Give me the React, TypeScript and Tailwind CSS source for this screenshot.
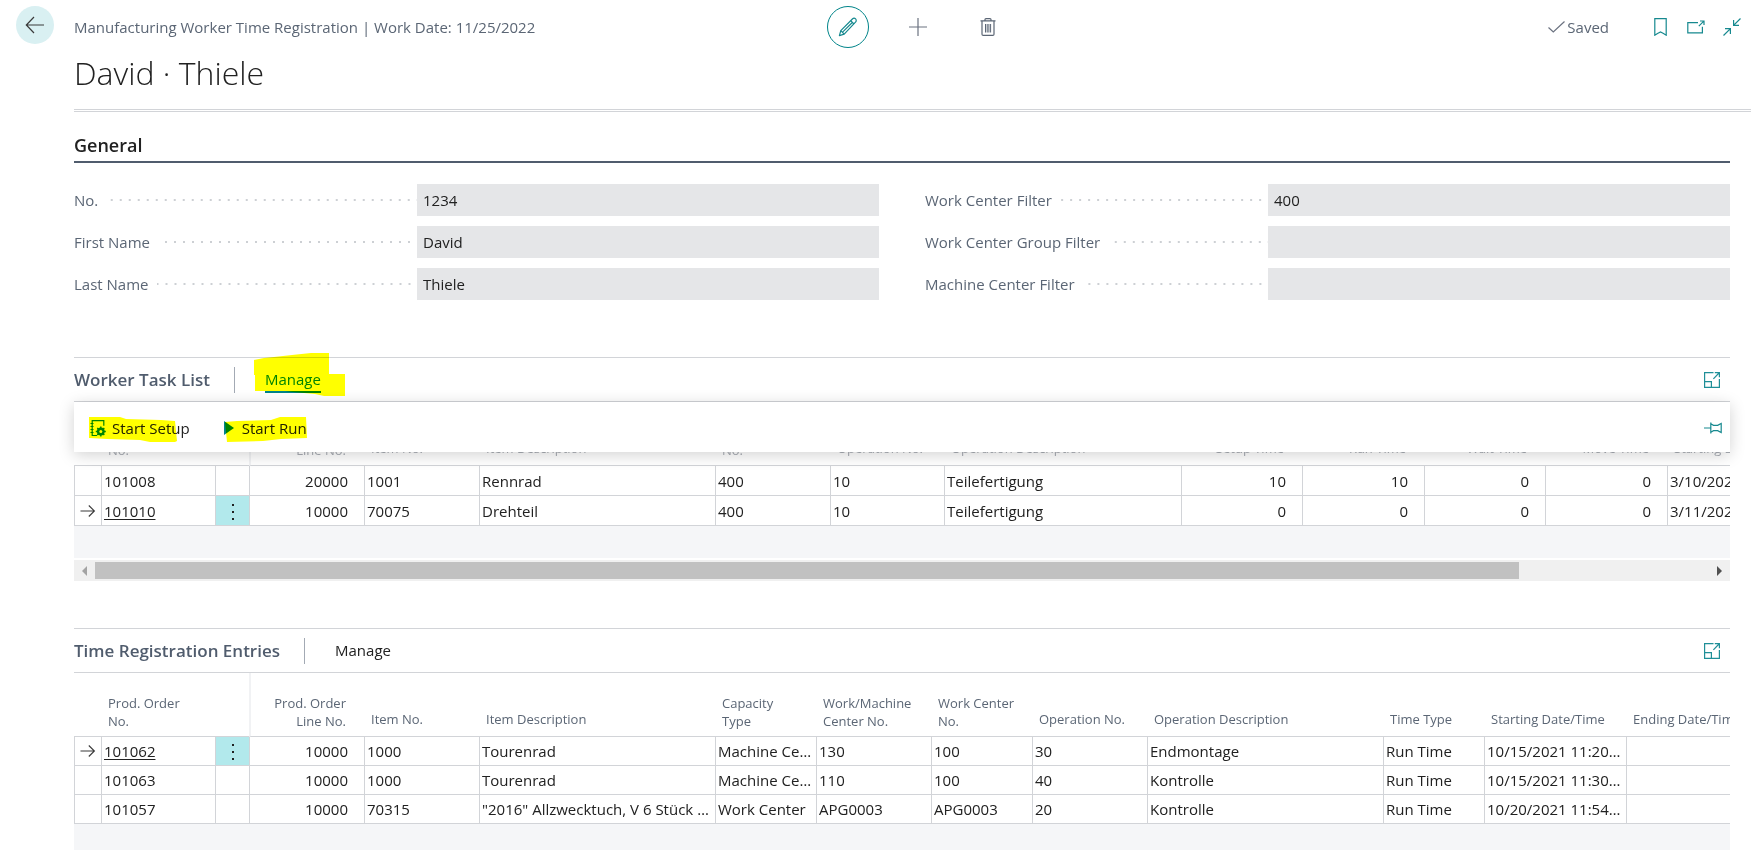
import type { ReactNode } from 'react';

type Column = { label: ReactNode; width: string; align?: 'right' };
type Row = { id: string; active?: boolean; cells: string[] };

const taskColumns: Column[] = [
  { label: <>Prod. Order<br />Line No.</>, width: 'w-[115px]', align: 'right' },
  { label: 'Item No.', width: 'w-[115px]' },
  { label: 'Item Description', width: 'w-[236px]' },
  { label: <>Work Center<br />No.</>, width: 'w-[115px]' },
  { label: 'Operation No.', width: 'w-[114px]' },
  { label: 'Operation Description', width: 'w-[237px]' },
  { label: 'Setup Time', width: 'w-[121px]', align: 'right' },
  { label: 'Run Time', width: 'w-[122px]', align: 'right' },
  { label: 'Wait Time', width: 'w-[121px]', align: 'right' },
  { label: 'Move Time', width: 'w-[122px]', align: 'right' },
  { label: 'Starting Date/Time', width: 'w-[142px]' },
];

const taskRows: Row[] = [
  { id: '101008', cells: ['20000', '1001', 'Rennrad', '400', '10', 'Teilefertigung', '10', '10', '0', '0', '3/10/2022 8:00'] },
  { id: '101010', active: true, cells: ['10000', '70075', 'Drehteil', '400', '10', 'Teilefertigung', '0', '0', '0', '0', '3/11/2022 8:00'] },
];

const entryColumns: Column[] = [
  { label: <>Prod. Order<br />Line No.</>, width: 'w-[115px]', align: 'right' },
  { label: 'Item No.', width: 'w-[115px]' },
  { label: 'Item Description', width: 'w-[236px]' },
  { label: <>Capacity<br />Type</>, width: 'w-[101px]' },
  { label: <>Work/Machine<br />Center No.</>, width: 'w-[115px]' },
  { label: <>Work Center<br />No.</>, width: 'w-[101px]' },
  { label: 'Operation No.', width: 'w-[115px]' },
  { label: 'Operation Description', width: 'w-[236px]' },
  { label: 'Time Type', width: 'w-[101px]' },
  { label: 'Starting Date/Time', width: 'w-[142px]' },
  { label: 'Ending Date/Time', width: 'w-[142px]' },
];

const entryRows: Row[] = [
  { id: '101062', active: true, cells: ['10000', '1000', 'Tourenrad', 'Machine Center', '130', '100', '30', 'Endmontage', 'Run Time', '10/15/2021 11:20 AM', ''] },
  { id: '101063', cells: ['10000', '1000', 'Tourenrad', 'Machine Center', '110', '100', '40', 'Kontrolle', 'Run Time', '10/15/2021 11:30 AM', ''] },
  { id: '101057', cells: ['10000', '70315', '"2016" Allzwecktuch, V 6 Stück im Paket', 'Work Center', 'APG0003', 'APG0003', '20', 'Kontrolle', 'Run Time', '10/20/2021 11:54 AM', ''] },
];

function ExpandIcon() {
  return (
    <svg width="18" height="18" viewBox="0 0 18 18" fill="none" stroke="#1f8f98" strokeWidth="1.2" aria-hidden="true">
      <path d="M10.5 1.6H1.6v14.8h14.8V8" />
      <path d="M1.6 10.6h6.8v5.8" />
      <path d="M10.4 7.8 16 2M11.8 1.6h4.6v4.6" />
    </svg>
  );
}

function Field({ id, label, value }: { id: string; label: string; value: string }) {
  return (
    <div className="flex h-8 items-center">
      <div className="flex w-[343px] shrink-0 items-center">
        <label htmlFor={id} className="pr-2 text-[15px] text-[#5b6675]">{label}</label>
        <span className="h-[2px] flex-1 bg-[linear-gradient(to_right,#cdd0d4_2px,transparent_2px)] bg-[length:9px_2px] bg-right" />
      </div>
      <input id={id} readOnly value={value} className="h-8 min-w-0 flex-1 bg-[#e5e6e8] px-[6px] text-[15px] text-[#212121] outline-none" />
    </div>
  );
}

function DataGrid({ columns, rows, name, dimmed }: { columns: Column[]; rows: Row[]; name: string; dimmed?: boolean }) {
  const headTone = dimmed ? 'text-[#a9adb4]' : 'text-[#5b6675]';
  const rowHeight = dimmed ? 'h-[30px]' : 'h-[29px]';
  const head = 'h-16 border-b border-[#d2d4d8] text-[13px] leading-[18px] font-normal whitespace-nowrap align-bottom';
  const cell = `${rowHeight} border-b border-l border-[#d2d4d8] truncate p-0`;
  return (
    <div className="overflow-hidden">
      <table aria-label={name} className="w-0 table-fixed border-separate border-spacing-0 bg-white text-[15px] leading-5 text-[#212121]">
        <thead>
          <tr className={headTone}>
            <th className={`${head} w-[27px]`} aria-label="Selected" />
            <th className={`${head} w-[114px] pb-[6px] pl-[7px] text-left`}>Prod. Order<br />No.</th>
            <th className={`${head} w-[34px]`} aria-label="Options" />
            {columns.map((column, i) => (
              <th
                key={i}
                className={`${head} ${column.width} ${typeof column.label === 'string' ? 'pb-2' : 'pb-[6px]'} ${column.align === 'right' ? 'pr-[18px] text-right' : 'pl-[7px] text-left'} ${i === 0 ? 'border-l-2 border-l-[#f1f2f4]' : ''}`}
              >
                {column.label}
              </th>
            ))}
          </tr>
        </thead>
        <tbody>
          {rows.map((row) => (
            <tr key={row.id}>
              <td className={cell}>
                {row.active && (
                  <svg className="ml-[5px]" width="16" height="14" viewBox="0 0 16 14" fill="none" stroke="#3a3a3a" strokeWidth="1.1" aria-hidden="true">
                    <path d="M.5 7h14M8.800 1.500 14.400 7l-5.600 5.500" />
                  </svg>
                )}
              </td>
              <td className={`${cell} pl-[2px]`}>
                {row.active ? <a href="#" className="underline underline-offset-2">{row.id}</a> : row.id}
              </td>
              <td className={`${cell} ${row.active ? 'bg-[#b2e9ec]' : ''}`}>
                {row.active && (
                  <button aria-label="Row options" className="flex h-7 w-full items-center justify-center">
                    <svg width="4" height="18" viewBox="0 0 4 18" fill="#212121" aria-hidden="true">
                      <rect x="1" y="2" width="2" height="2" />
                      <rect x="1" y="9" width="2" height="2" />
                      <rect x="1" y="16" width="2" height="2" />
                    </svg>
                  </button>
                )}
              </td>
              {row.cells.map((value, i) => (
                <td key={i} className={`${cell} ${columns[i].align === 'right' ? 'pr-4 text-right' : 'pr-1 pl-[2px]'}`}>{value}</td>
              ))}
            </tr>
          ))}
        </tbody>
      </table>
    </div>
  );
}

export default function App() {
  return (
    <div className="flex min-h-screen flex-col bg-white pl-[74px] font-['Open_Sans','Noto_Sans',sans-serif] text-[#212121]">
      <header>
        <div className="relative grid h-[54px] grid-cols-[1fr_auto_1fr] items-center">
          <button aria-label="Back" className="absolute top-[6px] -left-[58px] flex h-[38px] w-[38px] items-center justify-center rounded-full bg-[#d9f0f2]">
            <svg width="20" height="18" viewBox="0 0 20 18" fill="none" stroke="#3a3a3a" strokeWidth="1.2" aria-hidden="true">
              <path d="M19 9H1.5M9 1 1.3 9 9 17" />
            </svg>
          </button>
          <p className="text-[15px] text-[#5b6675]">Manufacturing Worker Time Registration | Work Date: 11/25/2022</p>
          <div className="flex gap-7">
            <button aria-label="Edit" className="flex h-[42px] w-[42px] items-center justify-center rounded-full border border-[#008489]">
              <svg width="20" height="20" viewBox="0 0 20 20" fill="none" stroke="#16898f" strokeWidth="1.2" strokeLinejoin="round" aria-hidden="true">
                <path d="M1.4 18.6 2.8 13.6 14.4 2c1-1 2.400-.9 3.200-.1s.9 2.200-.1 3.200L6.200 17.200Z" />
                <path d="M2.800 13.600 6.200 17.200M4.800 14.900 14.800 5M12.700 3.700 16 7" />
              </svg>
            </button>
            <button aria-label="New" className="flex h-[42px] w-[42px] items-center justify-center">
              <svg width="18" height="18" viewBox="0 0 18 18" stroke="#6b7280" strokeWidth="1.2" aria-hidden="true">
                <path d="M9 0v18M0 9h18" />
              </svg>
            </button>
            <button aria-label="Delete" className="flex h-[42px] w-[42px] items-center justify-center">
              <svg width="16" height="18" viewBox="0 0 16 18" fill="none" stroke="#5b6675" strokeWidth="1.200" aria-hidden="true">
                <path d="M.5 2.800h15M5 2.800V1.600q0-1 1-1h4q1 0 1 1v1.200M2 3v13.200q0 1.200 1.200 1.200h9.600q1.200 0 1.200-1.200V3" />
                <path d="M5.500 6v8.500M7.200 6v8.500M8.900 6v8.500M10.600 6v8.500" strokeWidth="1" />
              </svg>
            </button>
          </div>
          <div className="flex items-center justify-end gap-4 pr-[19px]">
            <span className="mr-[25px] flex items-center gap-[2px] text-[15px] text-[#5b6675]">
              <svg width="17" height="12" viewBox="0 0 17 12" fill="none" stroke="#6b7280" strokeWidth="1.200" aria-hidden="true">
                <path d="M.5 6.500 5.300 11 16.500.5" />
              </svg>
              Saved
            </span>
            <button aria-label="Bookmark" className="flex h-5 w-5 items-center justify-center">
              <svg width="13" height="18" viewBox="0 0 13 18" fill="none" stroke="#16898f" strokeWidth="1.200" aria-hidden="true">
                <path d="M.8.6h11.400v16.600L9.500 15.500 6.500 14 3.500 15.500.8 17.200Z" />
              </svg>
            </button>
            <button aria-label="Open in new window" className="flex h-5 w-5 items-center justify-center">
              <svg width="18" height="14" viewBox="0 0 18 14" fill="none" stroke="#16898f" strokeWidth="1.200" aria-hidden="true">
                <path d="M11 2.600H.8v10.200h14.600V6.800" />
                <path d="M11.800 6.200 16.600 1.400M13 1h4v4" />
              </svg>
            </button>
            <button aria-label="Collapse" className="flex h-5 w-5 items-center justify-center">
              <svg width="18" height="18" viewBox="0 0 18 18" fill="none" stroke="#16898f" strokeWidth="1.200" aria-hidden="true">
                <path d="M17.500.5 10.800 7.200M10.600 2v5.400H16M.5 17.500l6.700-6.700M2 10.600h5.400V16" />
              </svg>
            </button>
          </div>
        </div>
        <div className="mr-[10px] h-[58px] border-b-[3px] border-double border-[#d2d4d8]">
          <h1 className="text-[32px] leading-[38px] font-light">David · Thiele</h1>
        </div>
      </header>

      <main className="mr-[31px] flex flex-1 flex-col">
        <section>
          <h2 className="h-[51px] border-b-2 border-[#505c6d] pt-[21px] text-[18px] leading-6 font-semibold">General</h2>
          <div className="mt-[21px] grid grid-cols-2 gap-x-[46px]">
            <div className="flex flex-col gap-[10px]">
              <Field id="no" label="No." value="1234" />
              <Field id="first-name" label="First Name" value="David" />
              <Field id="last-name" label="Last Name" value="Thiele" />
            </div>
            <div className="flex flex-col gap-[10px]">
              <Field id="work-center" label="Work Center Filter" value="400" />
              <Field id="work-center-group" label="Work Center Group Filter" value="" />
              <Field id="machine-center" label="Machine Center Filter" value="" />
            </div>
          </div>
        </section>

        <section className="mt-[57px]">
          <div className="flex h-[45px] items-center border-y border-[#d2d4d8]">
            <h2 className="text-[17px] font-semibold text-[#505c6d]">Worker Task List</h2>
            <span className="ml-6 h-[26px] w-px bg-[#a3aab4]" />
            <button className="relative ml-[30px] border-b-2 border-[#008489] text-[15px] leading-6 text-[#008489]">
              Manage
              <svg className="absolute -top-[14px] -left-[11px] z-20 mix-blend-multiply" width="91" height="44" viewBox="0 0 91 44" fill="#ff0" aria-hidden="true">
                <path d="M0 7 10 5 20 4 38 2 57 0h18v21h16v22H70l-9-2-22-2-8-1H1V22H0Z" />
              </svg>
            </button>
            <button aria-label="Expand task list" className="mr-[9px] ml-auto"><ExpandIcon /></button>
          </div>

          <div className="relative">
            <div className="absolute inset-x-0 top-0 z-10 flex h-[50px] items-center bg-white pt-[2px] pl-4 shadow-[0_3px_16px_rgba(0,0,0,0.18)]">
              <button className="relative flex items-center gap-[6px] text-[15px]">
                <svg width="16" height="17" viewBox="0 0 16 17" fill="none" stroke="#008489" strokeWidth="1.200" aria-hidden="true">
                  <path d="M7 15.500H2.200V.7h11.600v5M.5 3.500h3M.5 6.500h3M.5 9.500h3M.5 12.500h3" />
                  <circle cx="10.800" cy="11.500" r="2.800" strokeWidth="2.200" />
                  <path d="M10.800 6.500v10M5.800 11.500h10M7.300 8l7 7M14.300 8l-7 7" strokeWidth="1.400" />
                  <circle cx="10.800" cy="11.500" r="1.500" fill="#fff" stroke="none" />
                </svg>
                Start Setup
                <svg className="absolute top-0 -left-[1px] mix-blend-multiply" width="89" height="25" viewBox="0 0 89 25" fill="#ff0" aria-hidden="true">
                  <path d="M0 0h31l6 2 35 1 14 1 2 20-2 1H61l-10-2-33-1L0 21Z" />
                </svg>
              </button>
              <button className="relative ml-[34px] flex items-center gap-2 text-[15px]">
                <svg width="10" height="14" viewBox="0 0 10 14" fill="#008489" aria-hidden="true">
                  <path d="M0 0 10 7 0 14Z" />
                </svg>
                Start Run
                <svg className="absolute top-0 left-[1px] mix-blend-multiply" width="82" height="25" viewBox="0 0 82 25" fill="#ff0" aria-hidden="true">
                  <path d="M0 5 12 4 46 3l9-3h26l1 21-26 1-18 2-36 1Z" />
                </svg>
              </button>
              <button aria-label="Pin actions" className="mr-2 ml-auto">
                <svg width="18" height="12" viewBox="0 0 18 12" fill="none" stroke="#16898f" strokeWidth="1.200" aria-hidden="true">
                  <path d="M0 6h6.500M6.800.5v11M6.800 1.800 9.500 3.300h4.200L17.200 1.500v9l-3.500-1.800H9.500L6.800 10.200" />
                </svg>
              </button>
            </div>
            <DataGrid name="Worker Task List" columns={taskColumns} rows={taskRows} dimmed />
          </div>
          <div className="h-8 bg-[#f5f6f8]" />
          <div className="mt-[2px] flex h-[21px] items-center bg-[#f0f0f0]">
            <button aria-label="Scroll left" className="flex w-[21px] justify-center">
              <svg width="5" height="10" viewBox="0 0 5 10" fill="#a3a3a3" aria-hidden="true"><path d="M5 0v10L0 5Z" /></svg>
            </button>
            <div className="h-full flex-1 py-[2px]"><div className="h-full w-[88.2%] bg-[#c1c1c1]" /></div>
            <button aria-label="Scroll right" className="flex w-[21px] justify-center">
              <svg width="5" height="10" viewBox="0 0 5 10" fill="#505050" aria-hidden="true"><path d="M0 0v10l5-5Z" /></svg>
            </button>
          </div>
        </section>

        <section className="mt-[47px] flex flex-1 flex-col">
          <div className="flex h-[45px] items-center border-y border-[#d2d4d8]">
            <h2 className="text-[17px] font-semibold text-[#505c6d]">Time Registration Entries</h2>
            <span className="ml-6 h-[26px] w-px bg-[#a3aab4]" />
            <button className="ml-[30px] text-[15px]">Manage</button>
            <button aria-label="Expand entries" className="mr-[9px] ml-auto"><ExpandIcon /></button>
          </div>
          <DataGrid name="Time Registration Entries" columns={entryColumns} rows={entryRows} />
          <div className="min-h-[24px] flex-1 bg-[#f5f6f8]" />
        </section>
      </main>
    </div>
  );
}
